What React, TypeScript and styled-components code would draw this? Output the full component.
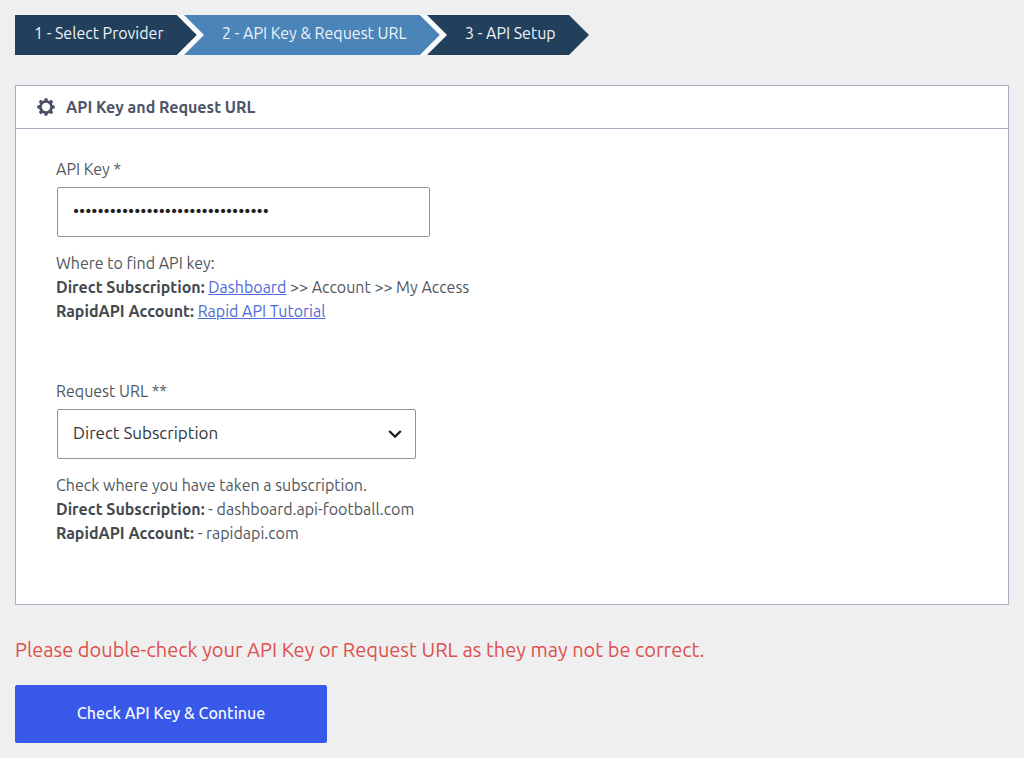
import React, { useState } from "react";
import styled, { createGlobalStyle } from "styled-components";

const GlobalStyle = createGlobalStyle`
  *, *::before, *::after { box-sizing: border-box; }
  body {
    margin: 0;
    background: #efefef;
    color: #50575e;
    font-family: Ubuntu, "Noto Sans", sans-serif;
    font-size: 16px;
    line-height: 24px;
  }
`;

const Page = styled.main`
  padding: 15px;
`;

const Steps = styled.ol`
  display: flex;
  margin: 0 0 30px;
  padding: 0;
  list-style: none;
`;

const Step = styled.li<{ $width: number }>`
  position: relative;
  flex: 0 1 ${(p) => p.$width}px;

  & + & {
    margin-left: -13px;
  }

  &:not(:last-child)::after {
    content: "";
    position: absolute;
    top: 0;
    right: -7px;
    width: 27px;
    height: 100%;
    background: #f9fafb;
    clip-path: polygon(0 0, 7px 0, 100% 50%, 7px 100%, 0 100%, 20px 50%);
  }
`;

const StepLabel = styled.span<{ $active?: boolean; $first?: boolean }>`
  display: block;
  height: 40px;
  padding-left: ${(p) => (p.$first ? 19 : 38)}px;
  background: ${(p) => (p.$active ? "#4b84b8" : "#22405c")};
  color: #eef3f8;
  line-height: 36px;
  white-space: nowrap;
  clip-path: ${(p) =>
    p.$first
      ? "polygon(0 0, calc(100% - 20px) 0, 100% 50%, calc(100% - 20px) 100%, 0 100%)"
      : "polygon(0 0, calc(100% - 20px) 0, 100% 50%, calc(100% - 20px) 100%, 0 100%, 20px 50%)"};
`;

const Panel = styled.section`
  border: 1px solid #a5b1c3;
  background: #fff;
`;

const PanelHeader = styled.header`
  display: flex;
  align-items: center;
  gap: 11px;
  height: 43px;
  padding: 0 21px;
  border-bottom: 1px solid #a5b1c3;
`;

const PanelTitle = styled.h2`
  margin: 0;
  color: #4d5566;
  font-size: 16px;
  font-weight: 600;
`;

const PanelBody = styled.div`
  display: flex;
  flex-direction: column;
  gap: 56px;
  padding: 28px 40px 59px;
`;

const Label = styled.label`
  display: block;
  margin-bottom: 6px;
`;

const control = `
  display: block;
  width: 100%;
  height: 50px;
  padding: 0 15px 4px;
  border: 1px solid #949494;
  border-radius: 2px;
  background: #fff;
  font-family: inherit;
  font-size: 17px;
`;

const ControlBox = styled.div<{ $width: number }>`
  position: relative;
  max-width: ${(p) => p.$width}px;
  margin: 0 0 14px 1px;
`;

const KeyInput = styled.input`
  ${control}
  color: #1e1e1e;
`;

const Select = styled.select`
  ${control}
  appearance: none;
  color: #32373c;
`;

const Chevron = styled.svg`
  position: absolute;
  top: 19px;
  right: 14px;
  pointer-events: none;
`;

const Help = styled.p`
  margin: 0;
`;

const Strong = styled.strong`
  color: #43494f;
  font-weight: 700;
`;

const Link = styled.a`
  color: #4f6bd8;
`;

const Warning = styled.p`
  margin: 30px 0 20px;
  color: #dc5050;
  font-size: 20px;
  line-height: 30px;
`;

const SubmitButton = styled.button`
  width: 312px;
  max-width: 100%;
  height: 58px;
  padding: 0 0 2px;
  border: 0;
  border-radius: 2px;
  background: #3858e9;
  color: #f4f6ff;
  font-family: inherit;
  font-size: 16px;
  font-weight: 500;
`;

const teeth = [0, 45, 90, 135, 180, 225, 270, 315];

function GearIcon() {
  return (
    <svg width="18" height="18" viewBox="0 0 18 18" aria-hidden="true">
      <circle cx="9" cy="9" r="5.5" fill="none" stroke="#4b5265" strokeWidth="2.6" />
      {teeth.map((angle) => (
        <path
          key={angle}
          d="M6.8 3.2 L7.7 0.2 H10.3 L11.2 3.2 Z"
          fill="#4b5265"
          transform={`rotate(${angle} 9 9)`}
        />
      ))}
    </svg>
  );
}

export default function App() {
  const [apiKey, setApiKey] = useState("0".repeat(32));
  const [source, setSource] = useState("direct");

  return (
    <>
      <GlobalStyle />
      <Page>
        <Steps>
          <Step $width={182}>
            <StepLabel $first>1 - Select Provider</StepLabel>
          </Step>
          <Step $width={256} aria-current="step">
            <StepLabel $active>2 - API Key &amp; Request URL</StepLabel>
          </Step>
          <Step $width={162}>
            <StepLabel>3 - API Setup</StepLabel>
          </Step>
        </Steps>

        <Panel>
          <PanelHeader>
            <GearIcon />
            <PanelTitle>API Key and Request URL</PanelTitle>
          </PanelHeader>
          <PanelBody>
            <div>
              <Label htmlFor="api-key">API Key *</Label>
              <ControlBox $width={373}>
                <KeyInput
                  id="api-key"
                  type="password"
                  value={apiKey}
                  onChange={(e) => setApiKey(e.target.value)}
                />
              </ControlBox>
              <Help>Where to find API key:</Help>
              <Help>
                <Strong>Direct Subscription:</Strong> <Link href="#dashboard">Dashboard</Link> &gt;&gt; Account
                &gt;&gt; My Access
              </Help>
              <Help>
                <Strong>RapidAPI Account:</Strong> <Link href="#tutorial">Rapid API Tutorial</Link>
              </Help>
            </div>
            <div>
              <Label htmlFor="request-url">Request URL **</Label>
              <ControlBox $width={359}>
                <Select id="request-url" value={source} onChange={(e) => setSource(e.target.value)}>
                  <option value="direct">Direct Subscription</option>
                  <option value="rapid">RapidAPI Account</option>
                </Select>
                <Chevron width="14" height="12" viewBox="0 0 14 12" aria-hidden="true">
                  <path d="M1.2 3 L7 8.6 L12.8 3" fill="none" stroke="#1e1e1e" strokeWidth="2.2" />
                </Chevron>
              </ControlBox>
              <Help>Check where you have taken a subscription.</Help>
              <Help>
                <Strong>Direct Subscription:</Strong> - dashboard.api-football.com
              </Help>
              <Help>
                <Strong>RapidAPI Account:</Strong> - rapidapi.com
              </Help>
            </div>
          </PanelBody>
        </Panel>

        <Warning>Please double-check your API Key or Request URL as they may not be correct.</Warning>
        <SubmitButton type="button">Check API Key &amp; Continue</SubmitButton>
      </Page>
    </>
  );
}
